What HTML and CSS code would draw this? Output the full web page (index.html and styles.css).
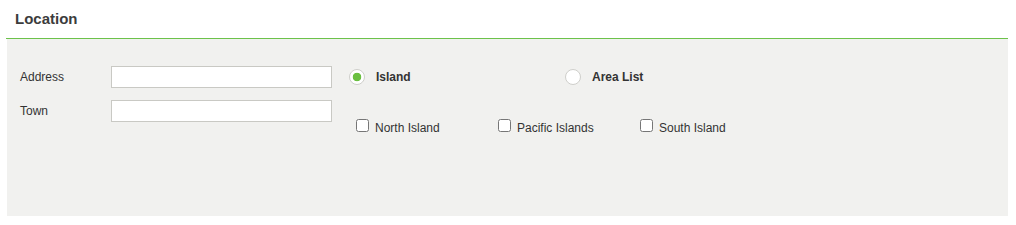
FILE: index.html
```html
<!DOCTYPE html>
<html lang="en">
<head>
    <meta charset="UTF-8">
    <meta name="viewport" content="width=device-width, initial-scale=1.0">
    <title>Location</title>
    <link rel="stylesheet" href="styles.css">
</head>
<body>
    <div class="location">
        <h2 class="location-title">Location</h2>

        <div class="location-body">
            <!-- Address fields -->
            <div class="fields">
                <label for="address">Address</label>
                <input type="text" id="address">
                <label for="town">Town</label>
                <input type="text" id="town">
            </div>

            <!-- Island / area selection -->
            <div class="areas">
                <div class="area-modes">
                    <label class="mode">
                        <input type="radio" name="mode" checked>
                        <span>Island</span>
                    </label>
                    <label class="mode">
                        <input type="radio" name="mode">
                        <span>Area List</span>
                    </label>
                </div>
                <div class="area-checks">
                    <label class="check"><input type="checkbox"><span>North Island</span></label>
                    <label class="check"><input type="checkbox"><span>Pacific Islands</span></label>
                    <label class="check"><input type="checkbox"><span>South Island</span></label>
                </div>
            </div>
        </div>
    </div>
</body>
</html>
```

FILE: styles.css
```css
* {
    margin: 0;
    padding: 0;
    box-sizing: border-box;
    font-family: "Liberation Sans", Arial, sans-serif;
}

body {
    background: white;
    color: #333;
    font-size: 12px;
}

.location {
    margin: 0 8px 0 6px;
}

.location-title {
    height: 39px;
    line-height: 37px;
    padding-left: 9px;
    font-size: 15px;
    font-weight: bold;
    color: #3c3c3c;
    border-bottom: 1px solid #6cc24a;
}

.location-body {
    display: flex;
    align-items: flex-start;
    margin-left: 1px;
    height: 177px;
    padding: 27px 0 0 13px;
    background: #f1f1ef;
}

.fields {
    display: grid;
    grid-template-columns: 91px 221px;
    row-gap: 12px;
    align-items: center;
}

.fields label {
    color: #333;
}

.fields input {
    height: 22px;
    border: 1px solid #c9c9c4;
    background: white;
    outline: none;
}

.areas {
    margin-left: 17px;
}

.area-modes {
    display: flex;
    height: 22px;
    align-items: center;
}

.mode {
    display: flex;
    align-items: center;
    width: 216px;
    font-weight: bold;
}

.mode input {
    appearance: none;
    width: 16px;
    height: 16px;
    margin-right: 11px;
    border: 1px solid #cfcfcb;
    border-radius: 50%;
    background: white;
}

.mode input:checked {
    background: radial-gradient(circle, #6abf40 0 4px, white 4.6px);
}

.area-checks {
    display: flex;
    margin: 31px 0 0 7px;
}

.check {
    display: flex;
    align-items: baseline;
    width: 142px;
}

.check input {
    width: 13px;
    height: 13px;
    margin: 0 6px 0 0;
}
```
